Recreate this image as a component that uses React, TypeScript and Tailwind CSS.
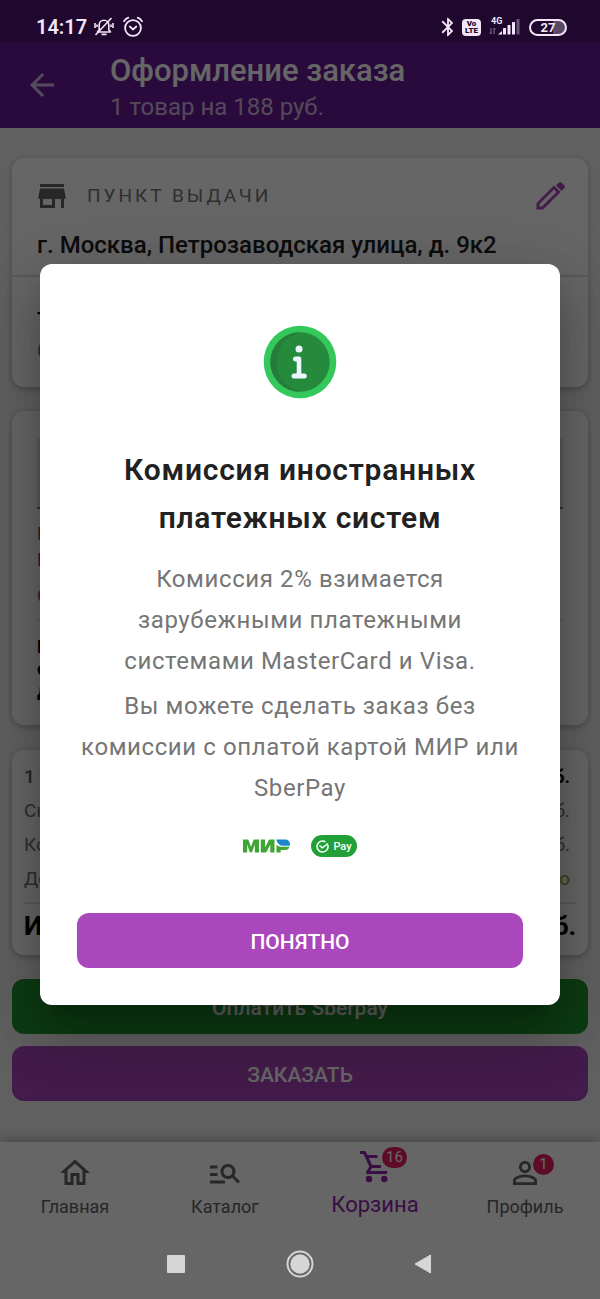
import { useState } from 'react'
import type { ReactNode } from 'react'
import clsx from 'clsx'
import {
  MdArrowBack,
  MdBluetooth,
  MdManageSearch,
  MdOutlineHome,
  MdPersonOutline,
  MdStore,
} from 'react-icons/md'

const rows = [
  { label: '1 товар', value: '188 руб.', className: 'font-medium text-[#616161]', valueClass: 'font-bold text-black' },
  { label: 'Скидка', value: '0 руб.', className: 'text-[#757575]', valueClass: '' },
  { label: 'Комиссия', value: '0 руб.', className: 'text-[#757575]', valueClass: '' },
  { label: 'Доставка', value: 'Бесплатно', className: 'text-[#757575]', valueClass: 'text-[#9e9d24]' },
]

const tabs = [
  { label: 'Главная', icon: <MdOutlineHome size={36} /> },
  { label: 'Каталог', icon: <MdManageSearch size={36} /> },
  { label: 'Корзина', icon: <CartIcon />, badge: 16, active: true },
  { label: 'Профиль', icon: <MdPersonOutline size={36} />, badge: 1 },
]

function CartIcon() {
  return (
    <svg width="38" height="38" viewBox="0 0 38 38" fill="none" stroke="currentColor" strokeWidth="3">
      <path d="M4 4.500h4.500L15 18.500l-3.500 6H31" strokeLinejoin="round" />
      <path d="M10.500 8.500h11M15 18.500h10" />
      <circle cx="13" cy="31" r="3.200" fill="currentColor" stroke="none" />
      <circle cx="28.300" cy="31" r="3.200" fill="currentColor" stroke="none" />
    </svg>
  )
}

function PencilIcon() {
  return (
    <svg width="36" height="36" viewBox="0 0 36 36">
      <path d="M6 30v-4.500L22 9.500l4.500 4.500-16 16z" fill="none" stroke="currentColor" strokeWidth="3" />
      <path d="M24 7.500 27 4.600a1.800 1.800 0 0 1 2.500 0l2.900 2.900a1.800 1.800 0 0 1 0 2.500L29.500 13z" fill="currentColor" />
    </svg>
  )
}

function BellOffIcon() {
  return (
    <svg width="20" height="20" viewBox="0 0 20 20" fill="none" stroke="currentColor" strokeWidth="1.6">
      <path d="M3.5 15h13l-1.700-2.200V8a4.800 4.800 0 0 0-9.600 0v4.800z" strokeLinejoin="round" />
      <path d="M7.500 17.400h5M1 6v5M19 6v5M3 7.500v2.500M17 7.500v2.500" />
      <path d="M1.500 18 17.500 1" />
    </svg>
  )
}

function AlarmIcon() {
  return (
    <svg width="22" height="22" viewBox="0 0 22 22" fill="none" stroke="currentColor" strokeWidth="1.800">
      <circle cx="11" cy="12" r="7.900" />
      <path d="M7.800 10.500 11 13.500l3.300-3M2 5.200C3 3.500 4.500 2.300 6.300 1.700M20 5.200C19 3.500 17.500 2.300 15.700 1.700" strokeLinecap="round" />
    </svg>
  )
}

function SignalIcon() {
  return (
    <svg width="32" height="20" viewBox="0 0 32 20" fill="currentColor">
      <text x="2" y="7" fontSize="9" fontWeight="700" fontFamily="Roboto, sans-serif">
        4G
      </text>
      <path d="M2 11v6M5 11v6M1 15.500l1 1.500M5 11l1.500 1.500" stroke="currentColor" strokeWidth="1" opacity=".5" />
      <path d="M9 17.500 13 14v3.500z" />
      <rect x="14" y="11" width="3" height="6.500" rx=".5" />
      <rect x="18.500" y="8" width="3" height="9.500" rx=".5" />
      <rect x="23" y="5" width="3" height="12.500" rx=".5" />
      <rect x="27.500" y="2" width="3" height="15.500" rx=".5" opacity=".35" />
    </svg>
  )
}

function InfoIcon() {
  return (
    <svg width="74" height="74" viewBox="0 0 74 74">
      <circle cx="37" cy="37" r="36.300" fill="#34c759" />
      <circle cx="37" cy="37" r="29.700" fill="#258a3c" />
      <path d="M37 7.300A29.700 29.700 0 1 0 37 66.700C22 62 14 52 14 37S22 12 37 7.300z" fill="#267d3b" />
      <g fill="#edf5ff">
        <circle cx="36" cy="24" r="3.500" />
        <path d="M32.500 31.500h3.500a2.300 2.300 0 0 1 2.300 2.300V48.500h3a2.500 2.500 0 0 1 0 5H31a2.500 2.500 0 0 1 0-5h2.700V36.500h-1.200a2.500 2.500 0 0 1 0-5z" />
      </g>
    </svg>
  )
}

function MirLogo() {
  return (
    <svg width="48" height="14" viewBox="0 0 48 14" role="img" aria-label="МИР">
      <g fill="#3fa535">
        <path d="M0 13.500V.500h4.500c.6 0 1 .4 1.200.9L8 8 10.300 1.400c.2-.5.600-.9 1.200-.9H16v13h-4.200V5.500L9.300 12.500c-.2.600-.6 1-1.200 1h-.4c-.6 0-1-.4-1.200-1L4.200 5.500v8z" />
        <path d="M17.800 13.500V.500H22v8l3.600-7c.3-.6.900-1 1.600-1h4.300v13h-4.200v-8l-3.600 7c-.3.600-.9 1-1.600 1z" />
        <path d="M33.500 13.500V5.500c1 1.400 2.500 2.200 4.500 2.200h8.600a5 5 0 0 1-4.700 3.300h-4.200v2.500z" />
      </g>
      <path d="M33.300.500h9.200c2.500 0 4.500 2 4.500 4.500 0 .7-.1 1.200-.3 1.700h-7.300c-3 0-5.500-3-6.100-6.200z" fill="#1b87c9" />
    </svg>
  )
}

function SberPayLogo() {
  return (
    <span className="flex h-[22px] w-[46px] items-center justify-center gap-1 rounded-full bg-[#21a038] text-white">
      <svg width="13" height="13" viewBox="0 0 13 13" fill="none" stroke="currentColor" strokeWidth="1.500">
        <path d="M11.800 5A5.500 5.500 0 1 1 9.500 1.900" />
        <path d="M3.500 5.500 6.300 7.800 12 3.500" />
      </svg>
      <span className="text-[11px] leading-none font-medium">Pay</span>
    </span>
  )
}

function StatusBar() {
  return (
    <div className="flex h-[42px] items-center justify-between bg-[#1f072d] pt-3 pr-[33px] pl-9 text-[#f3e6f8]">
      <div className="flex items-center gap-2">
        <span className="w-[50px] text-[20px] leading-6 font-semibold">14:17</span>
        <BellOffIcon />
        <AlarmIcon />
      </div>
      <div className="flex items-center gap-2">
        <div className="flex items-center gap-[3px]">
          <MdBluetooth size={22} />
          <span className="flex h-[17px] w-[19px] flex-col items-center justify-center rounded-sm bg-[#f3e6f8] text-[8px] leading-[7px] font-black text-[#1f072d]">
            <span>Vo</span>
            <span>LTE</span>
          </span>
        </div>
        <SignalIcon />
        <span className="flex h-[17px] w-[38px] items-center justify-center rounded-full border-2 border-current bg-linear-to-r from-transparent from-65% to-[#5b4965] to-65% text-[13px] leading-none font-bold">
          27
        </span>
      </div>
    </div>
  )
}

function Card({ className, children }: { className?: string; children: ReactNode }) {
  return (
    <section className={clsx('rounded-xl bg-white shadow-[0_2px_6px_rgba(0,0,0,0.25)]', className)}>
      {children}
    </section>
  )
}

function InfoDialog({ onClose }: { onClose: () => void }) {
  return (
    <div className="absolute inset-0 z-10 flex items-center justify-center bg-black/60 px-10">
      <div
        role="dialog"
        aria-modal="true"
        aria-labelledby="dialog-title"
        className="flex w-full max-w-[520px] flex-col items-center rounded-xl bg-white px-[37px] pt-[61px] pb-[37px] text-center shadow-[0_16px_24px_-8px_rgba(0,0,0,0.2),0_36px_56px_4px_rgba(0,0,0,0.14),0_14px_68px_12px_rgba(0,0,0,0.12)]"
      >
        <InfoIcon />
        <h2
          id="dialog-title"
          className="mt-[47px] text-[30px] leading-[48px] font-semibold tracking-wide text-[#212121]"
        >
          Комиссия иностранных
          <br />
          платежных систем
        </h2>
        <p className="mt-[17px] text-[24px] leading-[41px] tracking-wide text-[#757575]">
          Комиссия 2% взимается
          <br />
          зарубежными платежными
          <br />
          системами MasterCard и Visa.
        </p>
        <p className="mt-1 text-[24px] leading-[41px] tracking-wide whitespace-nowrap text-[#757575]">
          Вы можете сделать заказ без
          <br />
          комиссии с оплатой картой МИР или
          <br />
          SberPay
        </p>
        <div className="mt-[26px] flex items-center gap-5">
          <MirLogo />
          <SberPayLogo />
        </div>
        <button
          onClick={onClose}
          className="mt-14 h-[55px] w-full rounded-xl bg-[#ab47bc] pt-1 text-[21px] font-medium text-white"
        >
          ПОНЯТНО
        </button>
      </div>
    </div>
  )
}

export default function App() {
  const [open, setOpen] = useState(true)

  return (
    <div className="flex min-h-screen flex-col bg-[#f0f0f0] font-['Roboto','Noto_Sans',sans-serif]">
      <StatusBar />

      <div className="relative flex flex-1 flex-col">
        <header className="flex h-[86px] items-center bg-[#6a1b9a] pl-6 text-white">
          <button aria-label="Назад" className="text-white/70">
            <MdArrowBack size={36} />
          </button>
          <div className="ml-[50px] pt-1.5">
            <h1 className="text-[31px] leading-[38px] font-medium">Оформление заказа</h1>
            <p className="text-[24px] leading-[34px] text-white/70">1 товар на 188 руб.</p>
          </div>
        </header>

        <main className="flex-1 px-3 pt-[30px] pb-10">
          {/* Пункт выдачи */}
          <Card className="h-[229px]">
            <div className="flex h-[119px] flex-col border-b-2 border-[#e0e0e0] px-5 pt-5">
              <div className="flex h-9 items-center text-[#757575]">
                <MdStore size={36} className="ml-0.5 text-[#616161]" />
                <h2 className="ml-[17px] flex-1 text-[19px] tracking-[3px]">ПУНКТ ВЫДАЧИ</h2>
                <button aria-label="Изменить" className="text-[#ab47bc]">
                  <PencilIcon />
                </button>
              </div>
              <p className="mt-[15px] px-[5px] text-[24px] leading-8 font-medium text-[#212121]">
                г. Москва, Петрозаводская улица, д. 9к2
              </p>
            </div>
            <div className="px-[25px] pt-7">
              <p className="text-[22px] leading-8 font-medium text-black">Товар со склада</p>
              <p className="text-[20px] leading-7 text-[#757575]">Срок 7 дней</p>
            </div>
          </Card>

          {/* Промокод */}
          <Card className="mt-6 h-[314px] px-[25px] pt-[26px] text-[18px]">
            <input
              aria-label="Промокод"
              className="h-[72px] w-full rounded-t-sm border-b-2 border-[#757575] bg-[#e4e4e4] px-4"
            />
            <p className="mt-3 leading-[26px] text-[#616161]">Нажимая</p>
            <p className="leading-[26px] text-[#8e24aa]">Правила</p>
            <p className="mt-2.5 leading-[26px] text-[#616161]">Оплата</p>
            <div className="mt-2.5 border-t border-[#d0d0d0] pt-4 leading-[22px] font-bold">
              <p>Выдача</p>
              <p>сегодня</p>
              <p>до 21:00</p>
            </div>
          </Card>

          {/* Итог */}
          <Card className="mt-[25px] px-3 pt-2.5 pb-[11px]">
            {rows.map((row) => (
              <div
                key={row.label}
                className={clsx('flex h-[34px] items-center justify-between pr-1.5 text-[19px]', row.className)}
              >
                <span>{row.label}</span>
                <span className={row.valueClass}>{row.value}</span>
              </div>
            ))}
            <div className="mt-1.5 flex h-[42px] items-center justify-between border-t-2 border-[#e0e0e0] pt-1 text-[26px] font-bold">
              <span>Итого</span>
              <span>188 руб.</span>
            </div>
          </Card>

          <button className="mt-6 h-[55px] w-full rounded-xl bg-[#21962f] pt-1 text-[21px] font-medium text-white">
            Оплатить Sberpay
          </button>
          <button className="mt-3 h-[55px] w-full rounded-xl bg-[#ab47bc] pt-1 text-[21px] font-medium text-white">
            ЗАКАЗАТЬ
          </button>
        </main>

        <nav className="grid h-[85px] grid-cols-4 bg-white shadow-[0_-3px_12px_rgba(0,0,0,0.25)]">
          {tabs.map((tab) => (
            <a
              key={tab.label}
              href="#"
              className={clsx(
                'flex flex-col items-center',
                tab.active ? 'gap-[3px] pt-1.5 text-[22px] text-[#8e24aa]' : 'pt-[13px] text-[18px] text-[#616161]'
              )}
            >
              <span className="relative">
                {tab.icon}
                {tab.badge && (
                  <span className="absolute -top-px left-[26px] flex h-[21px] min-w-[21px] items-center justify-center rounded-full bg-[#e91e63] px-1 text-[15px] leading-none text-white">
                    {tab.badge}
                  </span>
                )}
              </span>
              <span className="leading-8">{tab.label}</span>
            </a>
          ))}
        </nav>

        {open && <InfoDialog onClose={() => setOpen(false)} />}
      </div>

      {/* Системная навигация */}
      <div className="relative flex h-[72px] items-center justify-center gap-[98px] bg-[#666666] pt-0.5 text-[#d6d6d6]">
        <button aria-label="Недавние">
          <svg width="24" height="28" viewBox="0 0 24 28" fill="currentColor">
            <rect x="3" y="5" width="18" height="18" rx="1" />
          </svg>
        </button>
        <button aria-label="Домой">
          <svg width="28" height="28" viewBox="0 0 28 28" fill="currentColor">
            <circle cx="14" cy="14" r="9.700" />
            <circle cx="14" cy="14" r="12.500" fill="none" stroke="currentColor" strokeWidth="2" />
          </svg>
        </button>
        <button aria-label="Назад в приложении">
          <svg width="24" height="28" viewBox="0 0 24 28" fill="currentColor">
            <path d="M18.500 5v18L3 14z" stroke="currentColor" strokeLinejoin="round" />
          </svg>
        </button>
      </div>
    </div>
  )
}
